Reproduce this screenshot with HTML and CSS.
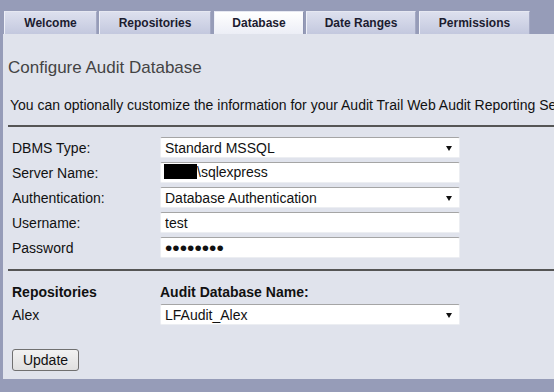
FILE: index.html
```html
<!DOCTYPE html>
<html lang="en">
<head>
  <meta charset="UTF-8">
  <title>Configure Audit Database</title>
  <link rel="stylesheet" href="styles.css">
</head>
<body>
  <div class="tabs">
    <div class="tab t1">Welcome</div>
    <div class="tab t2">Repositories</div>
    <div class="tab t3 active">Database</div>
    <div class="tab t4">Date Ranges</div>
    <div class="tab t5">Permissions</div>
  </div>

  <div class="panel">
    <h2>Configure Audit Database</h2>
    <p class="intro">You can optionally customize the information for your Audit Trail Web Audit Reporting Service database.</p>
    <hr>

    <div class="form">
      <label>DBMS Type:</label>
      <div class="select"><select><option>Standard MSSQL</option></select></div>

      <label>Server Name:</label>
      <div class="field"><span class="redact"></span>\sqlexpress</div>

      <label>Authentication:</label>
      <div class="select"><select><option>Database Authentication</option></select></div>

      <label>Username:</label>
      <input class="text" type="text" value="test">

      <label>Password</label>
      <input class="text pw" type="password" value="password">
    </div>

    <hr>

    <div class="form repos">
      <div class="head">Repositories</div>
      <div class="head">Audit Database Name:</div>

      <label>Alex</label>
      <div class="select"><select><option>LFAudit_Alex</option></select></div>
    </div>

    <button class="update">Update</button>
  </div>
</body>
</html>
```

FILE: styles.css
```css
body {
  margin: 0;
  background: #969cb8;
  font-family: "Liberation Sans", Arial, sans-serif;
  height: 392px;
  overflow: hidden;
}

.tabs {
  display: flex;
  padding: 11px 0 0 4px;
  gap: 2px;
}
.tab {
  height: 23px;
  box-sizing: border-box;
  font-size: 12px;
  font-weight: bold;
  color: #1c1c30;
  text-align: center;
  line-height: 22px;
  background: linear-gradient(#dde0ee, #c3c8de);
  border-left: 1px solid #eef0f8;
  border-top: 1px solid #e6e8f2;
  border-right: 1px solid #a4a9c4;
}
.tab.active {
  background: linear-gradient(#ffffff, #eceef6);
  border-right-color: #8d93b0;
}
.t1 { width: 93px; }
.t2 { width: 112px; }
.t3 { width: 90px; margin-left: 1px; }
.t4 { width: 110px; }
.t5 { width: 111px; margin-left: 1px; }

.panel {
  margin-left: 3px;
  background: #e0e3ec;
  height: 345px;
  padding: 24px 0 0 5px;
  box-sizing: border-box;
  overflow: hidden;
}

h2 {
  margin: 0;
  font-size: 17px;
  font-weight: normal;
  color: #444;
  line-height: 20px;
}
.intro {
  margin: 19px 0 0 2px;
  font-size: 14px;
  line-height: 17px;
  color: #111;
  white-space: nowrap;
  overflow: hidden;
}
hr {
  margin: 11px 0 0 0;
  border: 0;
  border-top: 2px solid #555;
  height: 0;
}

.form {
  display: grid;
  grid-template-columns: 148px 300px;
  row-gap: 4px;
  padding-left: 4px;
  margin-top: 10px;
  font-size: 14px;
  color: #111;
}
.form label {
  align-self: center;
}

.select, .field, .text {
  height: 21px;
  box-sizing: border-box;
  background: #fff;
  border: 1px solid #eceef2;
  border-top-color: #a5a5a5;
  border-radius: 2px;
  position: relative;
}
.select select {
  appearance: none;
  -webkit-appearance: none;
  border: 0;
  background: transparent;
  width: 100%;
  height: 100%;
  font: 14px "Liberation Sans", Arial, sans-serif;
  color: #111;
  padding: 0 0 0 4px;
  outline: none;
}
.select::after {
  content: "";
  position: absolute;
  right: 7px;
  top: 8px;
  border-left: 3.5px solid transparent;
  border-right: 3.5px solid transparent;
  border-top: 5px solid #111;
}
.field {
  padding-left: 3px;
  line-height: 19px;
}
.redact {
  display: inline-block;
  width: 33px;
  height: 15px;
  background: #000;
  vertical-align: -2px;
}
.text {
  font: 14px "Liberation Sans", Arial, sans-serif;
  color: #111;
  padding: 0 0 0 4px;
  outline: none;
}
.pw {
  font-size: 21px;
}

.repos {
  margin-top: 13px;
  row-gap: 4px;
}
.head {
  font-weight: bold;
  font-size: 14px;
  line-height: 16px;
  color: #111;
}

.update {
  margin: 24px 0 0 4px;
  width: 67px;
  height: 22px;
  font: 14px "Liberation Sans", Arial, sans-serif;
  color: #111;
  background: linear-gradient(#f2f2f2, #e0e0e0);
  border: 1px solid #707070;
  border-radius: 3px;
  padding: 0;
}
```
